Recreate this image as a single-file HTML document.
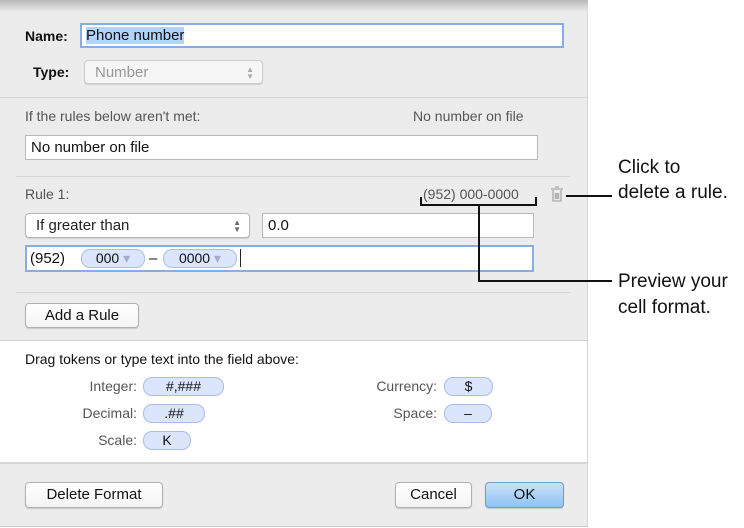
<!DOCTYPE html>
<html><head><style>
*{box-sizing:border-box;margin:0;padding:0}
body{width:744px;height:528px;background:#fff;position:relative;overflow:hidden;font-family:"Liberation Sans",sans-serif;font-size:14px;color:#222}
.a{position:absolute}
#dlg{left:0;top:0;width:588px;height:527px;background:#ececec;border-right:1px solid #d4d4d4;border-bottom:1px solid #ccc}
.sep{position:absolute;height:1px;background:#d6d6d6}
.tf{position:absolute;background:#fff;border:1px solid #b8b8b8;padding-left:5px;font-size:15px;color:#111;line-height:23px}
.pop{position:absolute;background:#fff;border:1px solid #b6b6b6;border-radius:4px;box-shadow:0 1px 1px rgba(0,0,0,.12);padding-left:10px;font-size:15px;line-height:23px}
.btn{position:absolute;background:linear-gradient(#fff,#f4f4f4);border:1px solid #b0b0b0;border-radius:4px;box-shadow:0 1px 1px rgba(0,0,0,.15);text-align:center;font-size:15px;line-height:24px;color:#111}
.tok{position:absolute;background:#dbe5fb;border:1px solid #a9bdee;border-radius:9px;height:19px;text-align:center;font-size:14px;line-height:17px;color:#111}
.lbl{position:absolute;color:#555;font-size:14px;text-align:right}
.ar{position:absolute;right:8px;top:5px;font-size:8px;line-height:7px;color:#666}
.call{position:absolute;font-size:19px;color:#111;line-height:24px;left:618px}
.ln{position:absolute;background:#111}
</style></head><body>
<div id="dlg" class="a">
 <div class="a" style="left:0;top:0;width:588px;height:12px;background:linear-gradient(#b8b8b8,#ececec)"></div>
 <div class="a" style="left:25px;top:28px;font-weight:bold;font-size:14px;color:#111">Name:</div>
 <div class="tf" style="left:80px;top:23px;width:484px;height:25px;border:2px solid #86aee3;padding-left:4px;line-height:21px"><span style="background:#b4d3fb">Phone number</span></div>
 <div class="a" style="left:33px;top:64px;font-weight:bold;font-size:14px;color:#111">Type:</div>
 <div class="pop" style="left:84px;top:60px;width:179px;height:24px;color:#999;background:#f6f6f6;border-color:#ccc">Number<div class="ar" style="color:#aaa">▲<br>▼</div></div>
 <div class="sep" style="left:0;top:97px;width:588px"></div>
 <div class="a" style="left:25px;top:108px;color:#555">If the rules below aren't met:</div>
 <div class="a" style="left:413px;top:108px;color:#555">No number on file</div>
 <div class="tf" style="left:25px;top:135px;width:513px;height:25px">No number on file</div>
 <div class="sep" style="left:16px;top:176px;width:554px"></div>
 <div class="a" style="left:25px;top:186px;color:#555">Rule 1:</div>
 <div class="a" style="left:423px;top:186px;color:#555">(952) 000-0000</div>
 <svg class="a" style="left:549px;top:185px" width="16" height="18" viewBox="0 0 16 18"><path d="M6 2h4M2 4h12M4 5v11h8V5M6.5 8v6M8 8v6M9.5 8v6" stroke="#aaa" stroke-width="1.3" fill="none"/></svg>
 <div class="pop" style="left:25px;top:213px;width:225px;height:25px">If greater than<div class="ar">▲<br>▼</div></div>
 <div class="tf" style="left:262px;top:213px;width:272px;height:25px">0.0</div>
 <div class="tf" style="left:25px;top:245px;width:509px;height:27px;border:2px solid #86aee3;padding-left:3px;line-height:23px">(952)
  <span class="tok" style="position:absolute;left:54px;top:2px;width:64px">000 <span style="color:#aac">▾</span></span>
  <span style="position:absolute;left:122px;top:0">–</span>
  <span class="tok" style="position:absolute;left:136px;top:2px;width:74px">0000 <span style="color:#aac">▾</span></span>
  <span style="position:absolute;left:213px;top:2px;width:1px;height:18px;background:#222"></span></div>
 <div class="sep" style="left:16px;top:292px;width:554px"></div>
 <div class="btn" style="left:25px;top:303px;width:114px;height:25px">Add a Rule</div>
 <div class="a" style="left:0;top:340px;width:587px;height:124px;background:#fff;border-top:1px solid #d0d0d0;border-bottom:2px solid #d6d6d6"></div>
 <div class="a" style="left:25px;top:351px;color:#111">Drag tokens or type text into the field above:</div>
 <div class="lbl" style="left:37px;width:100px;top:378px">Integer:</div>
 <div class="tok" style="left:143px;top:377px;width:81px">#,###</div>
 <div class="lbl" style="left:37px;width:100px;top:405px">Decimal:</div>
 <div class="tok" style="left:143px;top:404px;width:62px">.##</div>
 <div class="lbl" style="left:37px;width:100px;top:432px">Scale:</div>
 <div class="tok" style="left:143px;top:431px;width:48px">K</div>
 <div class="lbl" style="left:337px;width:100px;top:378px">Currency:</div>
 <div class="tok" style="left:444px;top:377px;width:49px">$</div>
 <div class="lbl" style="left:337px;width:100px;top:405px">Space:</div>
 <div class="tok" style="left:444px;top:404px;width:48px">–</div>
 <div class="btn" style="left:25px;top:482px;width:138px;height:26px">Delete Format</div>
 <div class="btn" style="left:395px;top:482px;width:77px;height:26px">Cancel</div>
 <div class="btn" style="left:485px;top:482px;width:79px;height:26px;background:linear-gradient(#c9e2fb,#8ec2f3);border-color:#6e9bd0">OK</div>
</div>
<div class="ln" style="left:566px;top:195px;width:46px;height:1.5px"></div>
<div class="ln" style="left:420px;top:204px;width:117px;height:1.5px"></div>
<div class="ln" style="left:420px;top:197px;width:1.5px;height:8px"></div>
<div class="ln" style="left:535px;top:197px;width:1.5px;height:8px"></div>
<div class="ln" style="left:478px;top:204px;width:1.5px;height:77px"></div>
<div class="ln" style="left:478px;top:280px;width:134px;height:1.5px"></div>
<div class="call" style="top:156px">Click to</div>
<div class="call" style="top:181px">delete a rule.</div>
<div class="call" style="top:270px">Preview your</div>
<div class="call" style="top:296px">cell format.</div>
</body></html>
